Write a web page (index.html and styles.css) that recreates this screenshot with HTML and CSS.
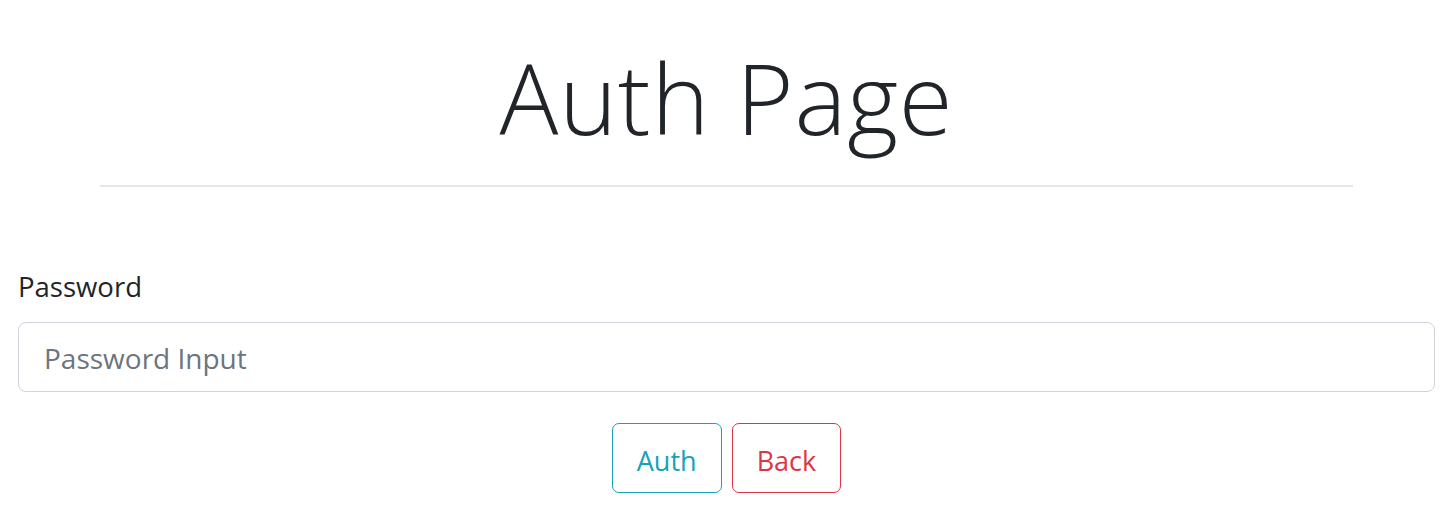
FILE: index.html
```html
<!DOCTYPE html>
<html>
<head>
<meta charset="utf-8">
<link rel="stylesheet" href="styles.css">
</head>
<body>
<div class="page">
  <h1 class="title">Auth Page</h1>
  <hr class="divider">
  <form class="auth-form">
    <label class="field-label" for="pw">Password</label>
    <input class="field-input" id="pw" type="password" placeholder="Password Input">
    <div class="actions">
      <button type="button" class="btn btn-info">Auth</button>
      <button type="button" class="btn btn-danger">Back</button>
    </div>
  </form>
</div>
</body>
</html>
```
FILE: styles.css
```css
* { box-sizing: border-box; }
body {
  margin: 0;
  font-family: "Open Sans", "Noto Sans", sans-serif;
  color: #212529;
  background: #fff;
}
.page {
  padding: 0 18px;
}
.title {
  margin: 0;
  padding-top: 39px;
  text-align: center;
  font-size: 98px;
  font-weight: 300;
  line-height: 1.2;
  letter-spacing: 0.8px;
}
.divider {
  margin: 28px 82px 0;
  border: 0;
  border-top: 2px solid #e6e6e6;
}
.auth-form {
  margin-top: 82px;
}
.field-label {
  display: block;
  font-size: 27.5px;
  line-height: 36px;
  margin-bottom: 17px;
}
.field-input {
  display: block;
  width: 100%;
  height: 70px;
  padding: 3px 25px 0;
  font-family: inherit;
  font-size: 28px;
  color: #495057;
  border: 1px solid #ced4da;
  border-radius: 8px;
  outline: none;
}
.field-input::placeholder { color: #6c757d; }
.actions {
  display: flex;
  justify-content: center;
  gap: 10px;
  margin-top: 31px;
}
.btn {
  height: 70px;
  padding: 5px 24px 0;
  font-family: inherit;
  font-size: 27px;
  background: #fff;
  border: 1px solid;
  border-radius: 7px;
}
.btn-info { color: #17a2b8; border-color: #17a2b8; }
.btn-danger { color: #dc3545; border-color: #dc3545; }
```
